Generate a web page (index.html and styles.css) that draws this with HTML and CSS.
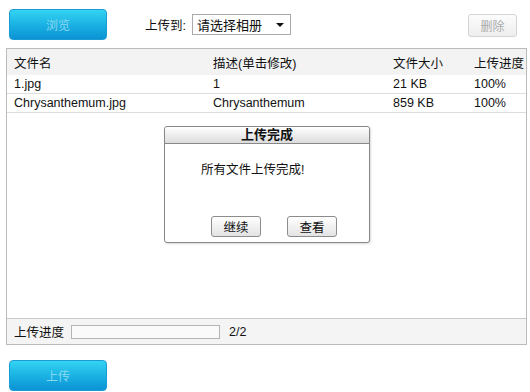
FILE: index.html
```html
<!DOCTYPE html>
<html lang="zh-CN">
<head>
    <meta charset="UTF-8">
    <title>上传照片</title>
    <link rel="stylesheet" href="styles.css">
</head>
<body>
<div class="toolbar">
    <button class="blue-btn">浏览</button>
    <div class="target">
        <span class="target-label">上传到:</span>
        <div class="album-select">
            <span>请选择相册</span>
            <span class="arrow"></span>
        </div>
    </div>
    <button class="gray-btn">删除</button>
</div>

<div class="file-list">
    <div class="grid head">
        <div>文件名</div>
        <div>描述(单击修改)</div>
        <div>文件大小</div>
        <div>上传进度</div>
    </div>
    <div class="grid row">
        <div>1.jpg</div>
        <div>1</div>
        <div>21 KB</div>
        <div>100%</div>
    </div>
    <div class="grid row">
        <div>Chrysanthemum.jpg</div>
        <div>Chrysanthemum</div>
        <div>859 KB</div>
        <div>100%</div>
    </div>

    <div class="spacer"></div>

    <div class="progress-bar">
        <span>上传进度</span>
        <div class="progress-track"></div>
        <span class="count">2/2</span>
    </div>

    <!-- popup shown once all files are uploaded -->
    <div class="dialog">
        <div class="dialog-title">上传完成</div>
        <div class="dialog-body">所有文件上传完成!</div>
        <div class="dialog-actions">
            <button class="dialog-btn">继续</button>
            <button class="dialog-btn">查看</button>
        </div>
    </div>
</div>

<div class="bottom">
    <button class="blue-btn">上传</button>
</div>
</body>
</html>
```

FILE: styles.css
```css
* {
    margin: 0;
    padding: 0;
    box-sizing: border-box;
}

body {
    font-family: "Liberation Sans", "Noto Sans CJK SC", sans-serif;
    font-size: 12.5px;
    color: #111;
    background: #fff;
    width: 530px;
    height: 392px;
    overflow: hidden;
}

button {
    font-family: inherit;
    font-size: 12px;
    cursor: pointer;
}

.toolbar {
    height: 48px;
    display: flex;
    align-items: flex-start;
    padding: 9px 13px 0 9px;
}

.blue-btn {
    width: 98px;
    height: 31px;
    border: 1px solid #1a9bd4;
    border-radius: 4px;
    background: linear-gradient(#34d4f2 0%, #1bb2e4 50%, #0b93d3 100%);
    color: #8ad7ef;
}

.target {
    display: flex;
    align-items: center;
    margin: 5px 0 0 38px;
    height: 21px;
}

.target-label {
    margin-right: 6px;
}

.album-select {
    width: 99px;
    height: 21px;
    border: 1px solid #aaa;
    display: flex;
    align-items: center;
    justify-content: space-between;
    padding: 0 6px 0 4px;
    font-size: 13px;
}

.arrow {
    border-left: 4px solid transparent;
    border-right: 4px solid transparent;
    border-top: 4px solid #111;
}

.gray-btn {
    margin: 5px 0 0 auto;
    width: 49px;
    height: 23px;
    border: 1px solid #d4d4d4;
    border-radius: 3px;
    background: linear-gradient(#fcfcfc, #eeeeee);
    color: #aaa;
}

.file-list {
    position: relative;
    margin-left: 6px;
    width: 521px;
    height: 297px;
    border: 1px solid #bbb;
    display: flex;
    flex-direction: column;
}

.grid {
    display: grid;
    grid-template-columns: 199px 180px 81px 1fr;
}

.grid div {
    padding-left: 7px;
    white-space: nowrap;
}

.head {
    height: 26px;
    align-items: center;
    background: #f3f3f3;
    padding-top: 1px;
}

.row {
    height: 19px;
    align-items: center;
    border-bottom: 1px solid #ddd;
}

.spacer {
    flex: 1;
}

.progress-bar {
    height: 26px;
    background: #f4f4f4;
    border-top: 1px solid #c8c8c8;
    display: flex;
    align-items: center;
    padding-left: 7px;
}

.progress-track {
    width: 149px;
    height: 14px;
    border: 1px solid #b5b5b5;
    background: #fafafa;
    margin: 0 9px 0 7px;
}

.dialog {
    position: absolute;
    left: 157px;
    top: 77px;
    width: 206px;
    height: 117px;
    background: #fff;
    border: 1px solid #888;
    border-radius: 3px;
    box-shadow: 1px 1px 2px rgba(0, 0, 0, 0.15);
    display: flex;
    flex-direction: column;
}

.dialog-title {
    height: 17px;
    line-height: 16px;
    text-align: center;
    font-weight: bold;
    font-size: 13px;
    background: linear-gradient(#ffffff, #dcdcdc);
    border-bottom: 1px solid #888;
    border-radius: 3px 3px 0 0;
}

.dialog-body {
    padding: 15px 0 0 36px;
    flex: 1;
}

.dialog-actions {
    display: flex;
    gap: 26px;
    padding: 0 0 5px 46px;
}

.dialog-btn {
    width: 50px;
    height: 21px;
    border: 1px solid #8c8c8c;
    border-radius: 3px;
    background: linear-gradient(#ffffff, #e3e3e3);
    color: #111;
    font-size: 12.5px;
}

.bottom {
    padding: 15px 0 0 9px;
}
```
